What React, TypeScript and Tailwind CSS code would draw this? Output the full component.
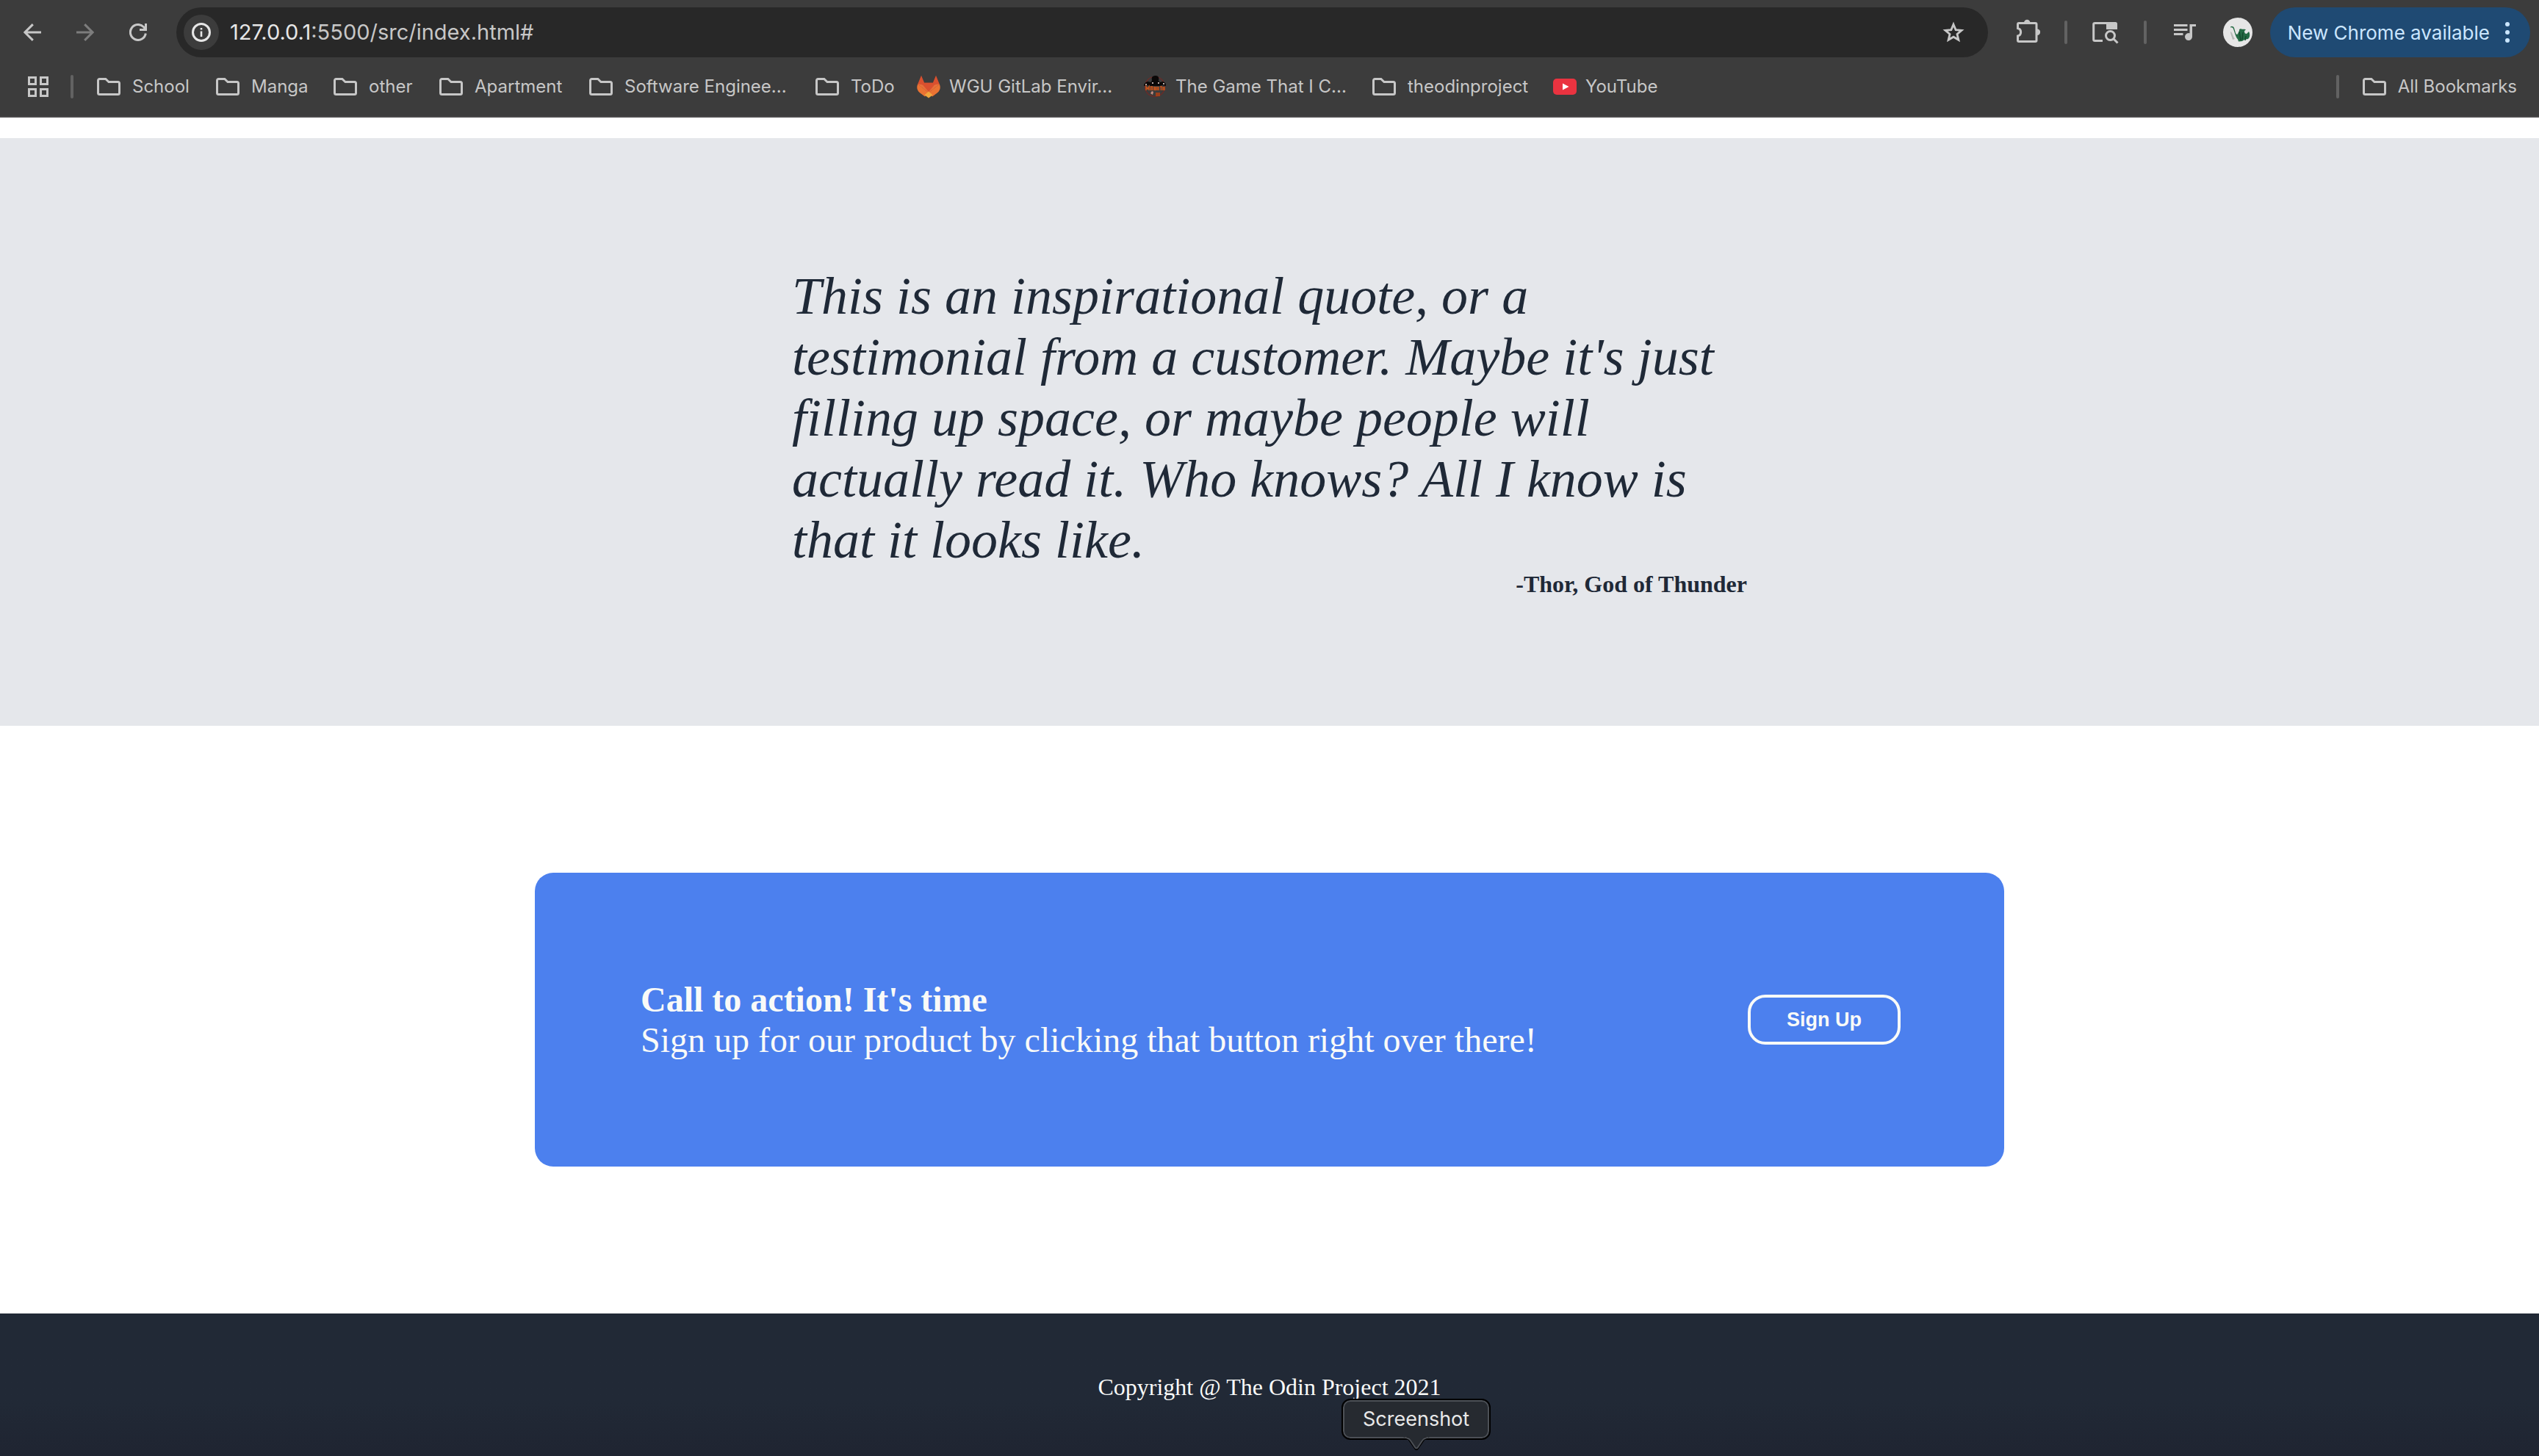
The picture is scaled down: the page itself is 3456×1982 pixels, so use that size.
import React from "react";

const serif = "font-['Liberation_Serif',serif]";

function BackIcon() {
  return (
    <svg viewBox="0 0 24 24" className="size-6" fill="none" stroke="currentColor" strokeWidth="3">
      <path d="M24 12H2.2M12.8 1.1 1.9 12l10.9 10.9" />
    </svg>
  );
}

function ForwardIcon() {
  return (
    <svg viewBox="0 0 24 24" className="size-6" fill="none" stroke="currentColor" strokeWidth="3">
      <path d="M0 12h21.8M11.2 1.1 22.1 12 11.2 22.9" />
    </svg>
  );
}

function ReloadIcon() {
  return (
    <svg viewBox="0 0 24 24" className="size-6" fill="none" stroke="currentColor" strokeWidth="3">
      <path d="M22.3 13.5A10.5 10.5 0 1 1 19.6 4.8L22 7.6" />
      <path d="M22.5 0v8.5H14" />
    </svg>
  );
}

function InfoIcon() {
  return (
    <svg viewBox="0 0 26 26" className="size-[26px]" fill="none" stroke="currentColor">
      <circle cx="13" cy="13" r="11.5" strokeWidth="3" />
      <path d="M13 11.5V19M13 7v2.6" strokeWidth="2.6" />
    </svg>
  );
}

function StarIcon() {
  return (
    <svg viewBox="0 0 30 30" className="size-[30px]" fill="none" stroke="currentColor" strokeWidth="2.8">
      <path d="m15 4.2 3.1 7.4 8 .7-6.1 5.2 1.9 7.8-6.9-4.1-6.900 4.1 1.900-7.800-6.100-5.200 8-.7z" />
    </svg>
  );
}

function ExtensionIcon() {
  return (
    <svg viewBox="0 0 32 32" className="size-8" fill="none" stroke="currentColor" strokeWidth="3">
      <path d="M1.5 12.5V7a1.5 1.5 0 0 1 1.5-1.5h22.5A1.5 1.5 0 0 1 27 7v22a1.5 1.5 0 0 1-1.5 1.5H3A1.5 1.5 0 0 1 1.5 29v-6a5.4 5.4 0 0 0 0-10.5z" />
      <path d="M10 5a4.200 4.200 0 0 1 8.400 0zM28 13.500a4.200 4.200 0 0 1 0 8.400z" fill="currentColor" stroke="none" />
    </svg>
  );
}

function LensIcon() {
  return (
    <svg viewBox="0 0 36 32" className="h-8 w-9" fill="none" stroke="currentColor" strokeWidth="3">
      <path d="M14 27.5H3.5A1.8 1.8 0 0 1 1.7 25.700V5.300A1.800 1.800 0 0 1 3.500 3.500h28" />
      <path d="M19 2h12.500A2.500 2.500 0 0 1 34 4.500V12H19z" fill="currentColor" stroke="none" />
      <circle cx="24.500" cy="20.500" r="6" />
      <path d="m28.500 24.500 6 6" />
    </svg>
  );
}

function QueueMusicIcon() {
  return (
    <svg viewBox="0 0 30 24" className="h-6 w-[30px]" fill="currentColor">
      <path d="M0 1h18.500v3H0zM0 7h18.500v3H0zM0 13h12.500v3H0z" />
      <path d="M21.500 1H30v3h-5v14a5 5 0 1 1-3.500-4.800z" />
    </svg>
  );
}

function FolderIcon() {
  return (
    <svg viewBox="0 0 32 24" className="h-6 w-8 shrink-0" fill="none" stroke="currentColor" strokeWidth="3">
      <path d="M3.500 1.500h8.300L16 5.500h12.500a2 2 0 0 1 2 2v13a2 2 0 0 1-2 2h-25a2 2 0 0 1-2-2v-17a2 2 0 0 1 2-2z" />
    </svg>
  );
}

function AppsIcon() {
  return (
    <svg viewBox="0 0 28 28" className="size-7" fill="none" stroke="currentColor" strokeWidth="3">
      <path d="M1.500 1.500h9v9h-9zM17.500 1.500h9v9h-9zM1.500 17.500h9v9h-9zM17.500 17.500h9v9h-9z" />
    </svg>
  );
}

function GitlabIcon() {
  return (
    <svg viewBox="0 0 32 32" className="size-8 shrink-0">
      <path d="M6 .8 1.200 12.500 16 24l14.800-11.500L26 .8l-4.200 10H10.200z" fill="#d9502f" />
      <path d="M1.200 12.500C-.8 17 .4 21.500 4 24.300L11 29.500l5-5.500zM30.800 12.500c2 4.500.8 9-2.800 11.800L21 29.500 16 24z" fill="#ea7333" />
      <path d="M1.200 12.500 16 24l14.800-11.500c-3.400-.2-6 .6-8.600 2.400L16 19l-6.200-4.100c-2.600-1.800-5.200-2.600-8.600-2.400z" fill="#e8703a" />
      <path d="M10.200 10.800h11.600l1.200 4-7 8.200-7-8.200z" fill="#d9502f" />
      <path d="m16 22.500-5.500 4.800L16 31.500l5.500-4.200z" fill="#f0a63c" />
    </svg>
  );
}

function ComicIcon() {
  return (
    <svg viewBox="0 0 32 32" className="size-8 shrink-0">
      <circle cx="16" cy="16" r="13.500" fill="none" stroke="#6f2a26" strokeWidth="1.200" />
      <path d="M1 15c0-3 2-5 5-6l5 1 1-3c-1-4 1-6 5-6s5 3 4 7l2 2 4-1c3 1 4 3 4 6l-4-1-5 1H10l-5-1z" fill="#0a0808" />
      <path d="M3 12h2v2H3zM12 10h2v2h-2zM20 10h2v2h-2zM27 11h2v2h-2z" fill="#b9a9a4" />
      <path d="M4 21v-5l2 3 2-3v5M10.500 21v-5h2v5M15 21v-5l2 5v-5M19 16v5M21 16v5M23 16h3M24.500 16v5M27 21v-4h2v4" fill="none" stroke="#c4531c" strokeWidth="1.600" />
      <path d="M12 22l-2 3 3 2 1-4z" fill="#c58e80" />
      <path d="M17 24h6v5h-6z" fill="#9c3f1b" />
    </svg>
  );
}

function YoutubeIcon() {
  return (
    <svg viewBox="0 0 32 32" className="size-8 shrink-0">
      <rect y="5" width="32" height="22" rx="5" fill="#ea3340" />
      <path d="m13 11.500 8.500 4.500-8.500 4.500z" fill="#fff" />
    </svg>
  );
}

function Avatar() {
  return (
    <svg viewBox="0 0 40 40" className="size-10">
      <circle cx="20" cy="20" r="20" fill="#e6e6e6" />
      <path d="M10 19c3 1 3 6 6 10l-3 1c-1-4-3-7-3-11z" fill="#b5bab7" />
      <path d="M10 12.500c2-1.500 4-.5 5 1.500l2 7c1 2 2 2.500 3 1l2-4c-.5-2 1-3 3-2.500 2.500.5 5-.5 6 1l-2 1.500c0 3 1 4 3 4l3-3c2 3 1.500 8-1 10l-5 1-3 2-5 .5-1-3c-3-3-4-9-6-14-.6-2-2-2.500-4-2z" fill="#256b45" />
      <path d="M22 19l2 12M27 20l-1 10M31 25l-1 6" stroke="#154a2e" strokeWidth="1.500" fill="none" />
    </svg>
  );
}

function Separator() {
  return <span className="h-8 w-1 shrink-0 rounded-full bg-[#626262]" />;
}

const bookmarks = [
  { label: "School", icon: <FolderIcon />, size: "w-[162px] gap-4" },
  { label: "Manga", icon: <FolderIcon />, size: "w-[160px] gap-4" },
  { label: "other", icon: <FolderIcon />, size: "w-36 gap-4" },
  { label: "Apartment", icon: <FolderIcon />, size: "w-[204px] gap-4" },
  { label: "Software Enginee...", icon: <FolderIcon />, size: "w-[308px] gap-4" },
  { label: "ToDo", icon: <FolderIcon />, size: "w-[138px] gap-4" },
  { label: "WGU GitLab Envir...", icon: <GitlabIcon />, size: "w-[308px] gap-3" },
  { label: "The Game That I C...", icon: <ComicIcon />, size: "w-[312px] gap-3" },
  { label: "theodinproject", icon: <FolderIcon />, size: "w-[246px] gap-4" },
  { label: "YouTube", icon: <YoutubeIcon />, size: "gap-3" },
];

function BrowserChrome() {
  return (
    <header className="shrink-0 border-b-2 border-[#4a494a] bg-[#3c3c3c] font-['Inter',sans-serif] text-[#c7c7c7]">
      <div className="flex items-center pt-[10px] pr-3 pl-8">
        <nav className="flex items-center gap-12 pr-10" aria-label="Navigation">
          <button aria-label="Back"><BackIcon /></button>
          <button aria-label="Forward" className="text-[#7d7d7d]"><ForwardIcon /></button>
          <button aria-label="Reload"><ReloadIcon /></button>
        </nav>
        <div className="flex h-[68px] flex-1 items-center rounded-full bg-[#282828] pr-8 pl-[10px]">
          <button aria-label="Site information" className="flex size-12 items-center justify-center rounded-full bg-[#3c3c3c] text-[#e6e6e6]">
            <InfoIcon />
          </button>
          <label className="flex flex-1 items-center pl-[15px] text-[29px]">
            <span className="text-[#e6e6e6]">127.0.0.1</span>
            <input
              aria-label="Address"
              defaultValue=":5500/src/index.html#"
              className="flex-1 bg-transparent text-[#c7c7c7] outline-none"
            />
          </label>
          <button aria-label="Bookmark this page"><StarIcon /></button>
        </div>
        <div className="flex items-center pl-[39px]">
          <button aria-label="Extensions" className="mr-[33px] -mt-1"><ExtensionIcon /></button>
          <Separator />
          <button aria-label="Search this page" className="mx-[34px]"><LensIcon /></button>
          <Separator />
          <button aria-label="Media controls" className="mx-[37px]"><QueueMusicIcon /></button>
          <button aria-label="Profile"><Avatar /></button>
          <button className="ml-6 flex h-[68px] items-center gap-5 rounded-full bg-[#1f4a73] pr-[27px] pl-6 text-[26px] text-[#cbe6ff]">
            New Chrome available
            <svg viewBox="0 0 8 30" className="h-[30px] w-2" fill="currentColor">
              <circle cx="4" cy="4" r="3" />
              <circle cx="4" cy="15" r="3" />
              <circle cx="4" cy="26" r="3" />
            </svg>
          </button>
        </div>
      </div>
      <div className="flex h-20 items-center pr-[30px] pl-[38px] text-[24px]">
        <button aria-label="Apps" className="mr-[30px]"><AppsIcon /></button>
        <Separator />
        <ul className="ml-8 flex flex-1">
          {bookmarks.map((b) => (
            <li key={b.label}>
              <a href="#" className={`flex items-center whitespace-nowrap ${b.size}`}>
                {b.icon}
                {b.label}
              </a>
            </li>
          ))}
        </ul>
        <Separator />
        <button className="ml-8 flex items-center gap-4">
          <FolderIcon />
          All Bookmarks
        </button>
      </div>
    </header>
  );
}

function Tooltip() {
  return (
    <div className="absolute bottom-6 left-[1828px] font-['Inter',sans-serif]" role="tooltip">
      <div className="flex h-[52px] items-center rounded-[10px] border-2 border-[#4c5056] bg-[#262a30] px-[25px] text-[27px] text-[#e8e8e8] outline-2 outline-black">
        Screenshot
      </div>
      <svg viewBox="0 0 36 20" className="absolute top-[49px] left-1/2 -ml-[18px] h-5 w-9">
        <path d="M0 1h36c-5 1-6 3-8 6l-7 10c-2 3-4 3-6 0L8 7C6 4 5 2 0 1z" fill="#000" />
        <path d="M4 0h28c-3 1-5 3-7 6l-5 8.500c-1.200 2-2.800 2-4 0L11 6C9 3 7 1 4 0z" fill="#262a30" />
        <path d="M2 2c4 0 6 1 8 4l6 9c1.300 2 2.700 2 4 0l6-9c2-3 4-4 8-4" fill="none" stroke="#4c5056" strokeWidth="2" />
      </svg>
    </div>
  );
}

export default function App() {
  return (
    <div className="relative flex h-screen flex-col overflow-hidden bg-white">
      <BrowserChrome />
      <main className={`shrink-0 pt-7 ${serif}`}>
        <section className="flex h-[800px] items-center justify-center bg-[#e5e7eb] text-[#1f2937]">
          <figure className="max-w-[1300px]">
            <blockquote className="text-[72px] leading-[83px] italic">
              This is an inspirational quote, or a testimonial from a customer. Maybe it's just
              filling up space, or maybe people will actually read it. Who knows? All I know is that
              it looks like.
            </blockquote>
            <figcaption className="text-right text-[32px] leading-[37px] font-bold">
              -Thor, God of Thunder
            </figcaption>
          </figure>
        </section>
        <section className="flex h-[800px] items-center justify-center">
          <div className="flex h-[400px] w-full max-w-[2000px] items-center justify-between rounded-[25px] bg-[#4c80ee] pr-[141px] pl-36 text-[#f9faf8]">
            <div className="text-[48px] leading-[55px]">
              <h2 className="font-bold">Call to action! It's time</h2>
              <p>Sign up for our product by clicking that button right over there!</p>
            </div>
            <button className="h-[68px] w-52 rounded-[24px] border-4 border-[#f9faf8] font-['Liberation_Sans',sans-serif] text-[27px] font-bold">
              Sign Up
            </button>
          </div>
        </section>
      </main>
      <footer className={`flex h-[200px] shrink-0 items-center justify-center bg-linear-to-b from-[#212936] from-60% to-[#1f2431] text-[32px] text-[#f9faf8] ${serif}`}>
        Copyright @ The Odin Project 2021
      </footer>
      <Tooltip />
    </div>
  );
}
